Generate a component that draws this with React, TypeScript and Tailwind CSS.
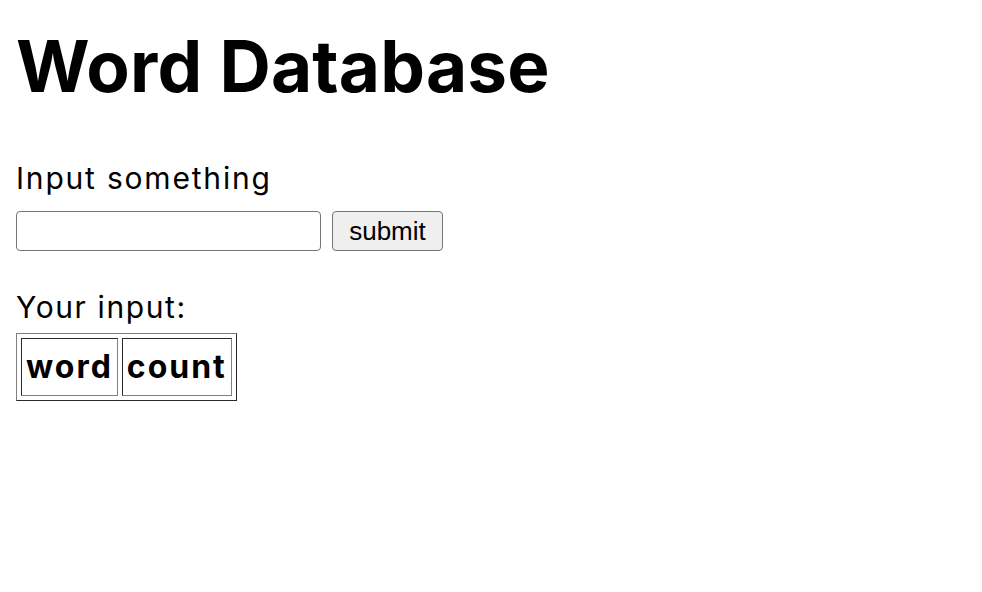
export default function App() {
  return (
    <div className="min-h-[592px] bg-white px-4 text-black" style={{ fontFamily: 'Inter, sans-serif' }}>
      <h1 className="pt-[22px] text-[71px] font-bold leading-[88px] tracking-[0.2px]">Word Database</h1>
      <form className="mt-[48px]" onSubmit={(e) => e.preventDefault()}>
        <p className="text-[30px] leading-[40px] tracking-[1.8px]">Input something</p>
        <div className="mt-[13px] flex items-center gap-[11px]">
          <input
            type="text"
            className="h-[40px] w-[305px] rounded-[4px] border border-[#767676] bg-white px-2"
          />
          <button
            type="submit"
            className="h-[40px] w-[111px] rounded-[4px] border border-[#767676] bg-[#efefef] text-[26px] font-['Liberation_Sans',sans-serif]"
          >
            submit
          </button>
        </div>
      </form>
      <p className="mt-[36px] text-[30px] leading-[40px] tracking-[1.6px]">Your input:</p>
      <table className="mt-[6px] border-separate border-spacing-[4px] border border-t-[#808080] border-l-[#808080] border-r-[#2a2a2a] border-b-[#2a2a2a]">
        <thead>
          <tr>
            <th className="border border-t-[#2a2a2a] border-l-[#2a2a2a] border-r-[#808080] border-b-[#808080] px-[4px] py-[2px] text-[32px] leading-[52px] font-bold tracking-[2px]">
              word
            </th>
            <th className="border border-t-[#2a2a2a] border-l-[#2a2a2a] border-r-[#808080] border-b-[#808080] px-[4px] py-[2px] text-[32px] leading-[52px] font-bold tracking-[2px]">
              count
            </th>
          </tr>
        </thead>
      </table>
    </div>
  );
}
